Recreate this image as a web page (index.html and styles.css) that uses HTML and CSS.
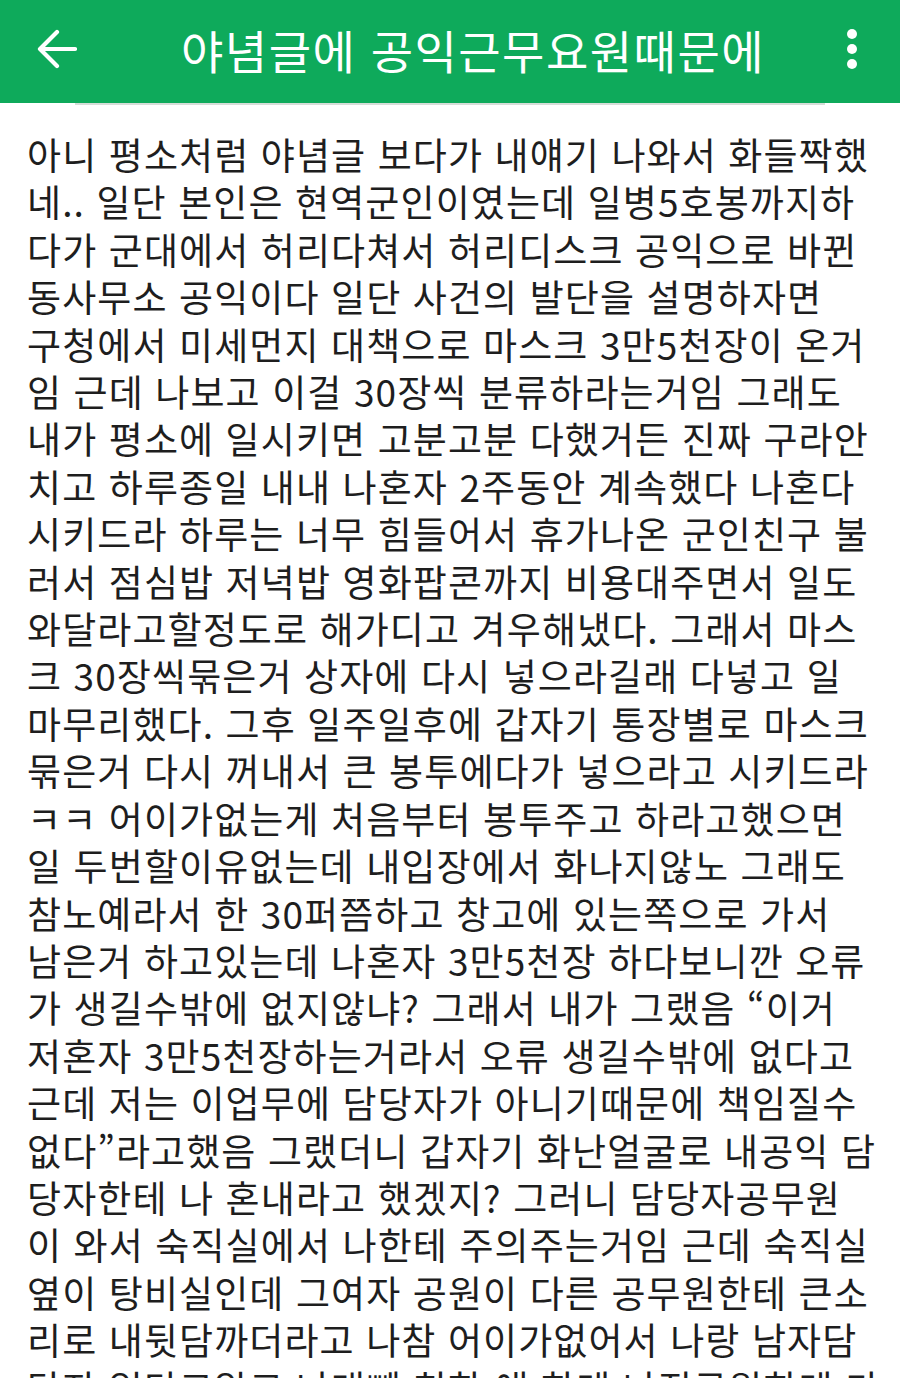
FILE: index.html
```html
<!DOCTYPE html>
<html lang="ko">
<head>
<meta charset="utf-8">
<link rel="stylesheet" href="styles.css">
</head>
<body>
<header class="toolbar">
  <div class="nav-btn">
    <svg width="40" height="40" viewBox="0 0 40 40"><path d="M38 20H4M20 3L3 20L20 37" fill="none" stroke="#fff" stroke-width="4.2" stroke-linecap="round" stroke-linejoin="round"/></svg>
  </div>
  <h1 class="title">야념글에 공익근무요원때문에</h1>
  <div class="menu-btn">
    <span class="dot"></span><span class="dot"></span><span class="dot"></span>
  </div>
</header>
<div class="divider"></div>
<main class="content">
<p class="post">아니 평소처럼 야념글 보다가 내얘기 나와서 화들짝했<br>네.. 일단 본인은 현역군인이였는데 일병5호봉까지하<br>다가 군대에서 허리다쳐서 허리디스크 공익으로 바뀐<br>동사무소 공익이다 일단 사건의 발단을 설명하자면<br>구청에서 미세먼지 대책으로 마스크 3만5천장이 온거<br>임 근데 나보고 이걸 30장씩 분류하라는거임 그래도<br>내가 평소에 일시키면 고분고분 다했거든 진짜 구라안<br>치고 하루종일 내내 나혼자 2주동안 계속했다 나혼다<br>시키드라 하루는 너무 힘들어서 휴가나온 군인친구 불<br>러서 점심밥 저녁밥 영화팝콘까지 비용대주면서 일도<br>와달라고할정도로 해가디고 겨우해냈다. 그래서 마스<br>크 30장씩묶은거 상자에 다시 넣으라길래 다넣고 일<br>마무리했다. 그후 일주일후에 갑자기 통장별로 마스크<br>묶은거 다시 꺼내서 큰 봉투에다가 넣으라고 시키드라<br>ㅋㅋ 어이가없는게 처음부터 봉투주고 하라고했으면<br>일 두번할이유없는데 내입장에서 화나지않노 그래도<br>참노예라서 한 30퍼쯤하고 창고에 있는쪽으로 가서<br>남은거 하고있는데 나혼자 3만5천장 하다보니깐 오류<br>가 생길수밖에 없지않냐? 그래서 내가 그랬음 “이거<br>저혼자 3만5천장하는거라서 오류 생길수밖에 없다고<br>근데 저는 이업무에 담당자가 아니기때문에 책임질수<br>없다”라고했음 그랬더니 갑자기 화난얼굴로 내공익 담<br>당자한테 나 혼내라고 했겠지? 그러니 담당자공무원<br>이 와서 숙직실에서 나한테 주의주는거임 근데 숙직실<br>옆이 탕비실인데 그여자 공원이 다른 공무원한테 큰소<br>리로 내뒷담까더라고 나참 어이가없어서 나랑 남자담<br>당자 일단고알고 나래빼 친한 애 한테 나직공원한테 가</p>
</main>
</body>
</html>
```

FILE: styles.css
```css
html, body {
  margin: 0;
  padding: 0;
  background: #ffffff;
  width: 900px;
  height: 1378px;
  overflow: hidden;
}

body {
  font-family: "Noto Sans CJK KR", "Noto Sans", sans-serif;
}

.toolbar {
  height: 103px;
  background: #0eaa5b;
  display: flex;
  align-items: center;
  box-sizing: border-box;
  padding: 0 0 6px 0;
}

.nav-btn {
  width: 40px;
  height: 40px;
  margin-left: 37px;
  display: flex;
  align-items: center;
  justify-content: center;
}

.title {
  margin: 0 0 0 104px;
  flex: 1;
  color: #ffffff;
  font-size: 46px;
  font-weight: 400;
  line-height: 1;
  white-space: nowrap;
  letter-spacing: 1.5px;
}

.menu-btn {
  width: 12px;
  margin-right: 42px;
  display: flex;
  flex-direction: column;
  align-items: center;
  gap: 5px;
}

.dot {
  width: 10px;
  height: 10px;
  border-radius: 50%;
  background: #ffffff;
}

.divider {
  height: 2px;
  margin: 0 75px;
  background: #d6ddd8;
}

.content {
  padding: 26px 0 0 27px;
}

.post {
  margin: 0;
  font-size: 37px;
  line-height: 47.4px;
  letter-spacing: 1.1px;
  color: #1e1e1e;
  white-space: nowrap;
}
```
